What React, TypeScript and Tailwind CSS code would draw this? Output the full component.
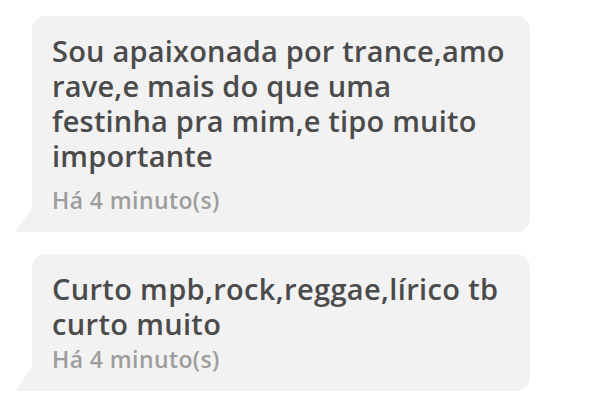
import * as React from "react";

type Msg = { lines: string[]; time: string; tracking: string; timeGap: string };

const messages: Msg[] = [
  {
    lines: [
      "Sou apaixonada por trance,amo",
      "rave,e mais do que uma",
      "festinha pra mim,e tipo muito",
      "importante",
    ],
    time: "Há 4 minuto(s)",
    tracking: "tracking-[0.2px]",
    timeGap: "mt-[13px]",
  },
  {
    lines: ["Curto mpb,rock,reggae,lírico tb", "curto muito"],
    time: "Há 4 minuto(s)",
    tracking: "tracking-[0.35px]",
    timeGap: "mt-[4px]",
  },
];

function Bubble({ msg }: { msg: Msg }) {
  return (
    <div className="relative w-[498px] rounded-[14px] rounded-bl-none bg-[#f2f2f2] pl-5 pr-4 pt-[17px] pb-[18px]">
      {/* tail on the lower left corner */}
      <span className="absolute bottom-0 left-[-17px] h-[24px] w-[17px] bg-[#f2f2f2] [clip-path:polygon(100%_0,100%_100%,0_100%)]" />
      <div className={`text-[29px] leading-[35px] font-semibold text-[#4b4b4b] ${msg.tracking}`}>
        {msg.lines.map((l) => (
          <div key={l}>{l}</div>
        ))}
      </div>
      <div className={`text-[23px] leading-[28px] tracking-[0.4px] font-semibold text-[#9d9d9d] ${msg.timeGap}`}>
        {msg.time}
      </div>
    </div>
  );
}

export default function App() {
  return (
    <div
      className="flex h-[413px] w-[615px] flex-col gap-[22px] bg-white pl-8 pt-4"
      style={{ fontFamily: '"Open Sans", sans-serif' }}
    >
      {messages.map((m, i) => (
        <Bubble key={i} msg={m} />
      ))}
    </div>
  );
}
